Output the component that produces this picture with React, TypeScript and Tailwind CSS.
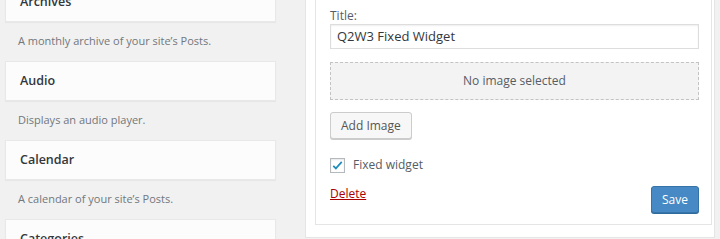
import React from 'react';

const font = { fontFamily: '"Open Sans", "Noto Sans", sans-serif' };

interface WidgetItem {
    name: string;
    description: string;
}

const widgets: WidgetItem[] = [
    { name: 'Archives', description: "A monthly archive of your site\u2019s Posts." },
    { name: 'Audio', description: 'Displays an audio player.' },
    { name: 'Calendar', description: "A calendar of your site\u2019s Posts." },
    { name: 'Categories', description: 'A list or dropdown of categories.' },
];

function WidgetCard({ item }: { item: WidgetItem }) {
    return (
        <div>
            <div className="h-[40px] flex items-center px-[14px] bg-[#fcfcfc] border border-[#e8e8e8] shadow-[0_1px_1px_rgba(0,0,0,0.04)] text-[12.5px] font-semibold text-[#32373c]">
                {item.name}
            </div>
            <div className="h-[39px] flex items-center px-[13px] text-[11px] text-[#72777c]">
                {item.description}
            </div>
        </div>
    );
}

export default function App() {
    return (
        <div className="w-[720px] h-[239px] overflow-hidden bg-[#f1f1f1] flex" style={font}>
            {/* available widgets column */}
            <div className="w-[305px] shrink-0 pl-[5px] pr-[29px] -mt-[18px]">
                {widgets.map((w) => (
                    <WidgetCard key={w.name} item={w} />
                ))}
            </div>

            {/* sidebar widget form */}
            <div className="w-[410px] h-[238px] shrink-0 bg-white border-x border-b border-[#e5e5e5] pl-[9px] pr-[2px] pb-[12px]">
                <div className="h-full border-x border-b border-[#e5e5e5] bg-white pl-[14px] pr-[12px] pt-[8px]">
                    <label className="block text-[12px] leading-[16px] text-[#555d66]">Title:</label>
                    <div className="h-[25px] border border-[#dddddd] shadow-[inset_0_1px_2px_rgba(0,0,0,0.07)] flex items-center px-[6px] text-[13px] text-[#32373c]">
                        Q2W3 Fixed Widget
                    </div>
                    <div className="mt-[13px] h-[38px] border border-dashed border-[#c3c3c3] bg-[#f3f3f3] flex items-center justify-center text-[12px] text-[#555d66]">
                        No image selected
                    </div>
                    <button className="mt-[12px] h-[27px] px-[10px] border border-[#cccccc] bg-[#f7f7f7] rounded-[3px] shadow-[0_1px_0_#cccccc] text-[12px] text-[#555555]">
                        Add Image
                    </button>
                    <div className="mt-[17px] flex items-center gap-[8px]">
                        <span className="w-[15px] h-[15px] border border-[#b4b9be] bg-white shadow-[inset_0_1px_2px_rgba(0,0,0,0.1)] flex items-center justify-center">
                            <svg width="13" height="13" viewBox="0 0 20 20">
                                <path d="M3.5 10.5l4 4 9-10" fill="none" stroke="#1e8cbe" strokeWidth="2.6" />
                            </svg>
                        </span>
                        <span className="text-[12px] text-[#555d66]">Fixed widget</span>
                    </div>
                    <div className="mt-[12px] flex items-start justify-between">
                        <a className="-mt-[1px] text-[12px] text-[#a00] underline">Delete</a>
                        <button className="h-[27px] px-[10px] rounded-[3px] bg-[#4689c4] border border-[#3673a8] shadow-[0_1px_0_#2f6a9c] text-[12px] text-white">
                            Save
                        </button>
                    </div>
                </div>
            </div>
        </div>
    );
}
